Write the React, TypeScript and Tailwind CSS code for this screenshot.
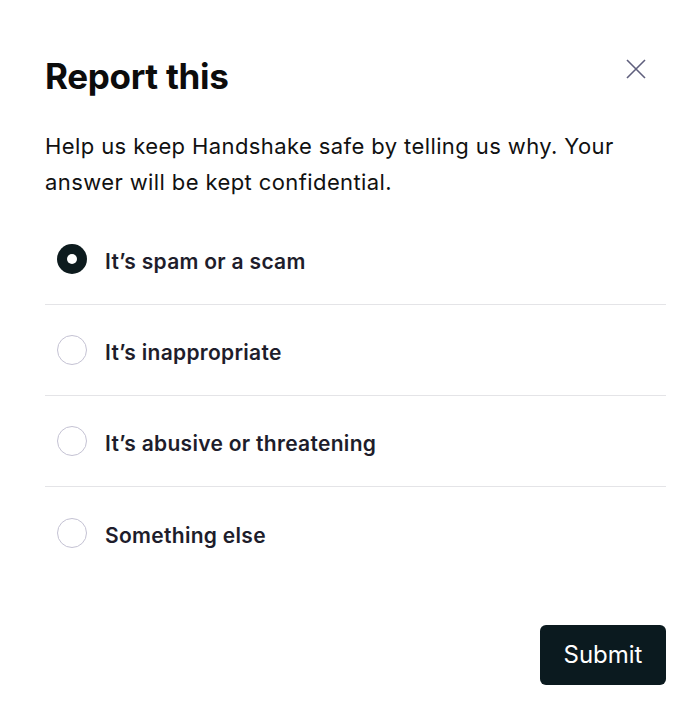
import { useState } from 'react'

const reasons = [
  "It’s spam or a scam",
  "It’s inappropriate",
  "It’s abusive or threatening",
  'Something else',
]

export default function App() {
  const [picked, setPicked] = useState(0)

  return (
    <div className="min-h-screen bg-white font-['Inter',sans-serif] text-[#0c0c0c]">
      <div className="w-[694px] pl-[45px] pr-[28px] pt-[56px]">
        <div className="flex items-start justify-between">
          <h1 className="text-[35px] font-bold leading-[40px] tracking-[-0.3px]">Report this</h1>
          <button className="mr-[18px] mt-[1px] text-[#5f5f7d]" aria-label="Close">
            <svg width="24" height="24" viewBox="0 0 24 24" fill="none" stroke="currentColor" strokeWidth="1.6">
              <path d="M3 3l18 18M21 3L3 21" />
            </svg>
          </button>
        </div>

        <p className="mt-[32px] text-[22px] leading-[36px] tracking-[0.4px] text-[#111]">
          Help us keep Handshake safe by telling us why. Your answer will be kept confidential.
        </p>

        <ul className="mt-[14px]">
          {reasons.map((label, i) => (
            <li
              key={label}
              className={`flex h-[91px] cursor-pointer items-center gap-[18px] pl-[12px] ${
                i < reasons.length - 1 ? 'border-b border-[#e4e4e7]' : ''
              }`}
              onClick={() => setPicked(i)}
            >
              {picked === i ? (
                <span className="flex h-[30px] w-[30px] items-center justify-center rounded-full bg-[#0d1b1e]">
                  <span className="h-[10px] w-[10px] rounded-full bg-white" />
                </span>
              ) : (
                <span className="h-[30px] w-[30px] rounded-full border border-[#c4c2d3]" />
              )}
              <span className="pt-[6px] text-[21px] font-semibold tracking-[0.3px] text-[#1e1d2b]">{label}</span>
            </li>
          ))}
        </ul>

        <div className="mt-[47px] flex justify-end">
          <button className="h-[60px] w-[126px] rounded-[6px] bg-[#0b1a1f] text-[24px] text-white">Submit</button>
        </div>
      </div>
    </div>
  )
}
